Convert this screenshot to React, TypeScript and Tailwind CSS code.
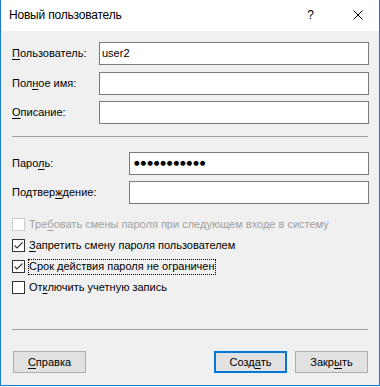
import React from "react"

const U: React.FC<{ children: React.ReactNode }> = ({ children }) => (
    <span className="underline underline-offset-[2px] decoration-1">{children}</span>
)

const Field: React.FC<{ label: React.ReactNode, labelW: string, value?: React.ReactNode, className?: string }> = ({ label, labelW, value, className = "" }) => (
    <div className={`flex items-center h-[23px] ${className}`}>
        <div className={`${labelW} shrink-0 leading-none whitespace-nowrap`}>{label}</div>
        <div className="flex-1 h-[23px] border border-[#7a7a7a] bg-white flex items-center pl-[2px] leading-none">
            {value}
        </div>
    </div>
)

const Check: React.FC<{ checked?: boolean, disabled?: boolean, focus?: boolean, children: React.ReactNode }> = ({ checked = false, disabled = false, focus = false, children }) => (
    <div className="flex items-center h-[21px]">
        <div className={`w-[13px] h-[13px] border bg-white shrink-0 ${disabled ? "border-[#cccccc]" : "border-[#333333]"}`}>
            {checked && (
                <svg width="11" height="11" viewBox="0 0 11 11">
                    <path d="M1.5 5.5 L4 8 L9.5 2.5" fill="none" stroke="#333333" strokeWidth="1.1" />
                </svg>
            )}
        </div>
        <div className={`ml-[3px] px-[1px] h-[16px] flex items-center leading-none whitespace-nowrap ${focus ? "outline-1 outline-dotted outline-black -outline-offset-1" : ""} ${disabled ? "text-[#a0a0a0]" : ""}`}>
            {children}
        </div>
    </div>
)

const Btn: React.FC<{ def?: boolean, children: React.ReactNode }> = ({ def = false, children }) => (
    <div className={`w-[73px] h-[22px] flex items-center justify-center bg-[#e1e1e1] leading-none ${def ? "border-2 border-[#0078d7]" : "border border-[#adadad]"}`}>
        {children}
    </div>
)

export default function App() {
    return (
        <div className="w-[380px] h-[387px] bg-white font-['Liberation_Sans',sans-serif] text-[11px] text-black">
            <div className="w-[380px] h-[386px] border-x border-b border-[#1979ca] bg-[#f0f0f0] flex flex-col">
                {/* title bar */}
                <div className="h-[31px] bg-white flex items-center pl-[8px] shrink-0 text-[12px]">
                    <span className="leading-none -mt-[2px] tracking-[-0.2px]">Новый пользователь</span>
                    <span className="ml-auto mr-[39px] leading-none -mt-[2px]">?</span>
                    <svg className="mr-[16px] -mt-[1px]" width="10" height="10" viewBox="0 0 10 10">
                        <path d="M0.5 0.5 L9.5 9.5 M9.5 0.5 L0.5 9.5" stroke="#000" strokeWidth="1" />
                    </svg>
                </div>

                <div className="flex flex-col pl-[11px] pr-[10px] pt-[11px]">
                    <Field labelW="w-[87px]" label={<><U>П</U>ользователь:</>} value="user2" />
                    <Field className="mt-[7px]" labelW="w-[87px]" label={<>Пол<U>н</U>ое имя:</>} />
                    <Field className="mt-[6px]" labelW="w-[87px]" label={<><U>О</U>писание:</>} />

                    <div className="mt-[12px] mr-[1px] border-t border-[#a0a0a0]" />

                    <Field className="mt-[15px]" labelW="w-[117px]" label={<>Паро<U>л</U>ь:</>}
                        value={<span className="pl-[2px] text-[6.5px] tracking-[0.9px] font-['DejaVu_Sans']">●●●●●●●●●●●</span>} />
                    <Field className="mt-[6px]" labelW="w-[117px]" label={<>Подтвер<U>ж</U>дение:</>} />

                    <div className="mt-[10px] flex flex-col">
                        <Check disabled>Тре<U>б</U>овать смены пароля при следующем входе в систему</Check>
                        <Check checked><U>З</U>апретить смену пароля пользователем</Check>
                        <Check checked focus>Срок действия пароля не ограничен</Check>
                        <Check>От<U>к</U>лючить учетную запись</Check>
                    </div>

                    <div className="mt-[31px] mr-[1px] border-t border-[#a0a0a0]" />

                    <div className="mt-[21px] flex items-center pl-[1px] pr-[1px]">
                        <Btn><U>С</U>правка</Btn>
                        <div className="ml-auto flex gap-[8px]">
                            <Btn def>Созд<U>а</U>ть</Btn>
                            <Btn>Закр<U>ы</U>ть</Btn>
                        </div>
                    </div>
                </div>
            </div>
        </div>
    )
}
